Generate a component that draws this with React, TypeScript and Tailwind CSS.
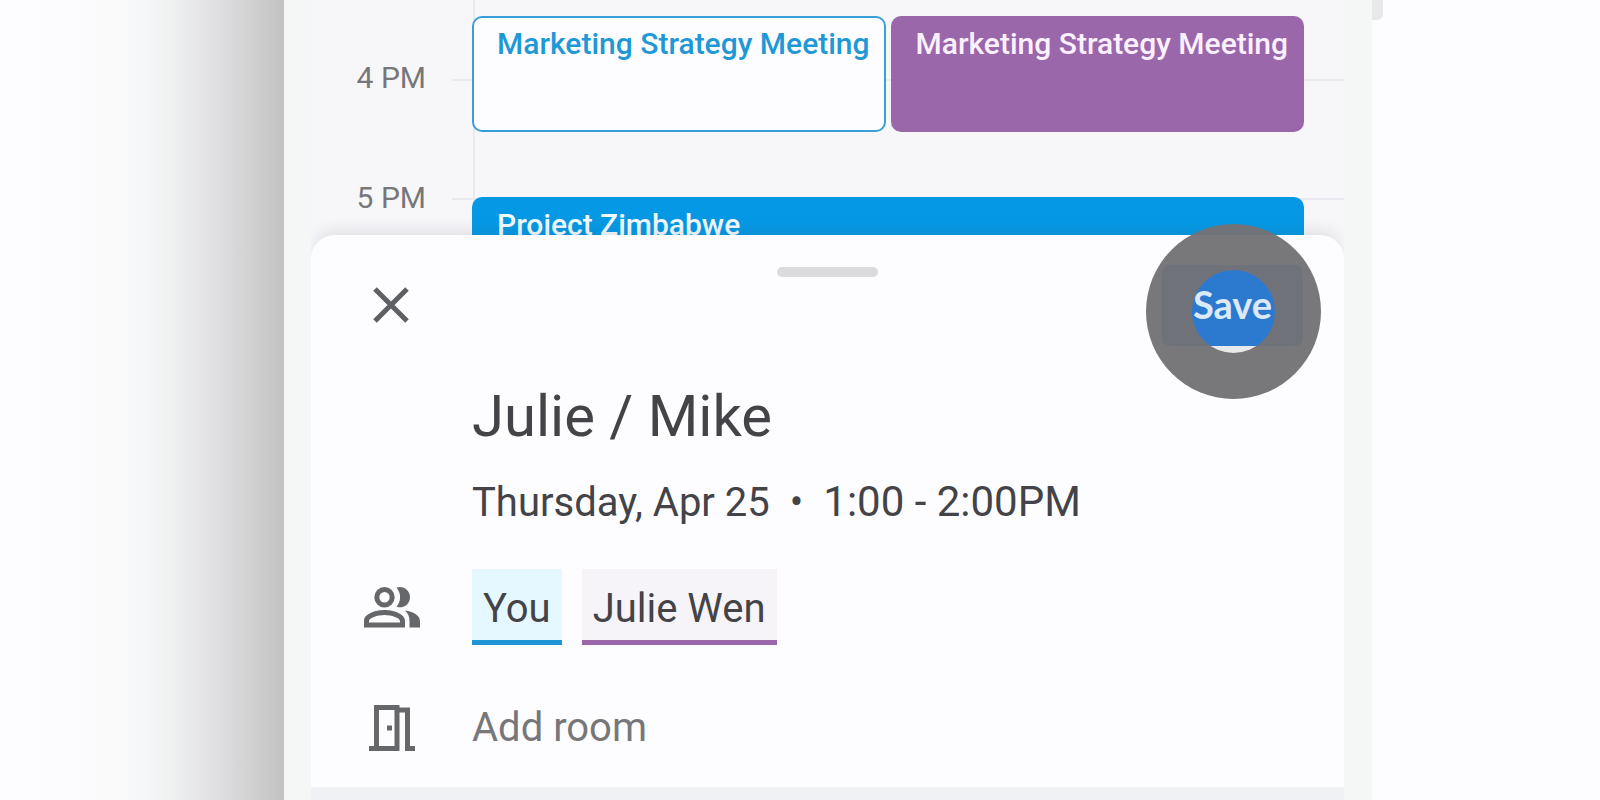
import React from "react";

type EventProps = {
  title: string;
  className: string;
};

const hours = ["4 PM", "5 PM"];

function CalendarEvent({ title, className }: EventProps) {
  return (
    <div
      className={`rounded-[10px] border-2 pl-[23px] pt-1 text-[30px] leading-[44px] font-medium whitespace-nowrap ${className}`}
    >
      {title}
    </div>
  );
}

function Calendar() {
  return (
    <section className="relative flex h-[260px] overflow-hidden bg-[#f7f7fa]">
      {/* grid lines behind the events */}
      <div className="absolute inset-y-0 left-[162px] w-[2px] bg-[#ebebef]" />
      <div className="absolute top-[79px] right-0 left-[141px] h-[2px] bg-[#ebe9f0]" />
      <div className="absolute top-[198px] right-0 left-[141px] h-[2px] bg-[#ebe9f0]" />

      <div className="flex w-[115px] shrink-0 flex-col gap-20 pt-[58px] text-right text-[30px] leading-10 text-[#77777a]">
        {hours.map((hour) => (
          <span key={hour}>{hour}</span>
        ))}
      </div>

      <div className="relative mr-10 ml-[46px] min-w-0 flex-1 pt-4">
        <div className="grid h-[116px] grid-cols-2 gap-[5px]">
          <CalendarEvent
            title="Marketing Strategy Meeting"
            className="border-[#3a9fd8] bg-[#fdfdff] text-[#1f98d8]"
          />
          <CalendarEvent
            title="Marketing Strategy Meeting"
            className="border-[#9b67ab] bg-[#9b67ab] text-[#fbf0ff]"
          />
        </div>
        <div className="mt-[65px]">
          <CalendarEvent
            title="Project Zimbabwe"
            className="h-[116px] border-[#0599e5] bg-[#0599e5] text-[#f0faff]"
          />
        </div>
      </div>
    </section>
  );
}

function SaveButton() {
  return (
    <button
      type="button"
      className="relative h-[81px] w-[141px] rounded-lg bg-[#1f7ae0] text-[38px] font-bold text-[#dbe9f8]"
    >
      {/* touch ripple */}
      <span className="absolute -top-[41px] -left-4 size-[175px] rounded-full border-[46px] border-[#747376]/96 bg-[#77777a]/15" />
      <span className="relative font-['Lato',sans-serif]">Save</span>
    </button>
  );
}

function CloseIcon() {
  return (
    <svg viewBox="0 0 36 36" className="size-9">
      <path d="M2 2 34 34M34 2 2 34" stroke="#5f6064" strokeWidth="5" fill="none" />
    </svg>
  );
}

function PeopleIcon() {
  return (
    <svg viewBox="0 0 56 42" className="h-[42px] w-14" fill="#66676b">
      <path
        fillRule="evenodd"
        d="M20.500 1a10.200 10.200 0 1 1 0 20.400a10.200 10.200 0 1 1 0-20.400zM20.500 6a5.200 5.200 0 1 0 0 10.400a5.200 5.200 0 1 0 0-10.400z"
      />
      <path
        fillRule="evenodd"
        d="M0 41.500v-6.500C0 27.500 12 24 20.500 24S41 27.500 41 35v6.500zM5 36.500h31v-1.500c0-3-8.500-6-15.500-6S5 32 5 35z"
      />
      <path d="M32.500 1.600c7-2.300 13.500 2.800 13.500 9.600s-6.500 11.900-13.500 9.600c4.800-5.800 4.800-13.400 0-19.200z" />
      <path d="M41 24.500c8 1.200 15 4.800 15 10.500v6.500H45.500V35c0-4.500-1.500-7.800-4.500-10.500z" />
    </svg>
  );
}

function DoorIcon() {
  return (
    <svg viewBox="0 0 46 46" className="size-[46px]" fill="#66676b">
      <path
        fillRule="evenodd"
        d="M0 41h5V0h25.500v2.500H41V41h5v5H36V7.500h-5.500V46H0zM10 5v36h15.500V5z"
      />
      <path d="M18 20.500h5v5h-5z" />
    </svg>
  );
}

function EventSheet() {
  return (
    <section className="relative z-10 -mt-[25px] h-[552px] rounded-t-3xl bg-[#fdfdff] pt-[30px] text-[#434348] shadow-[0_-10px_14px_-4px_rgba(60,60,70,0.10)]">
      {/* drag handle */}
      <div className="absolute inset-x-0 top-8 mx-auto h-[10px] w-[101px] rounded-full bg-[#dbdbde]" />

      <div className="flex items-start justify-between pr-[41px] pl-[62px]">
        <button type="button" aria-label="Close" className="mt-[22px]">
          <CloseIcon />
        </button>
        <SaveButton />
      </div>

      <div className="pl-[161px]">
        <h1 className="mt-8 text-[58px] leading-[76px]">Julie / Mike</h1>
        <p className="mt-5 text-[40px] leading-[56px]">
          Thursday, Apr 25
          <span className="mx-5">•</span>
          <span className="text-[42px]">1:00 - 2:00PM</span>
        </p>
      </div>

      <div className="mt-[38px] flex items-center">
        <div className="flex w-[161px] shrink-0 pl-[53px]">
          <PeopleIcon />
        </div>
        <div className="flex gap-5 text-[40px] leading-[63px]">
          <span className="border-b-[5px] border-[#2095d5] bg-[#e6f8ff] px-[11px] pt-2">You</span>
          <span className="border-b-[5px] border-[#9b67ab] bg-[#f6f4f8] px-[11px] pt-2">Julie Wen</span>
        </div>
      </div>

      <div className="mt-[55px] flex items-center">
        <div className="flex w-[161px] shrink-0 pl-[58px]">
          <DoorIcon />
        </div>
        <button type="button" className="text-[40px] leading-[56px] text-[#77777a]">
          Add room
        </button>
      </div>
    </section>
  );
}

export default function App() {
  return (
    <main className="grid h-screen grid-cols-[284fr_1088fr_228fr] overflow-hidden bg-[#fdfdff] font-['Roboto',sans-serif]">
      {/* shadow cast by the phone */}
      <div className="bg-[linear-gradient(to_right,#fdfdff_0%,#fcfcfe_25%,#fafafb_38%,#f6f7f8_50%,#f0f2f2_59%,#e6e6e9_70%,#dbdbdd_80%,#cfcfd0_90%,#c2c2c2_100%)]" />

      <div className="bg-[#f5f7f7] pr-7 pl-[27px]">
        <div className="h-screen overflow-hidden bg-[#eff1f4]">
          <Calendar />
          <EventSheet />
        </div>
      </div>

      <div>
        <div className="h-5 w-[11px] rounded-br-md bg-[#e8e8ea]" />
      </div>
    </main>
  );
}
